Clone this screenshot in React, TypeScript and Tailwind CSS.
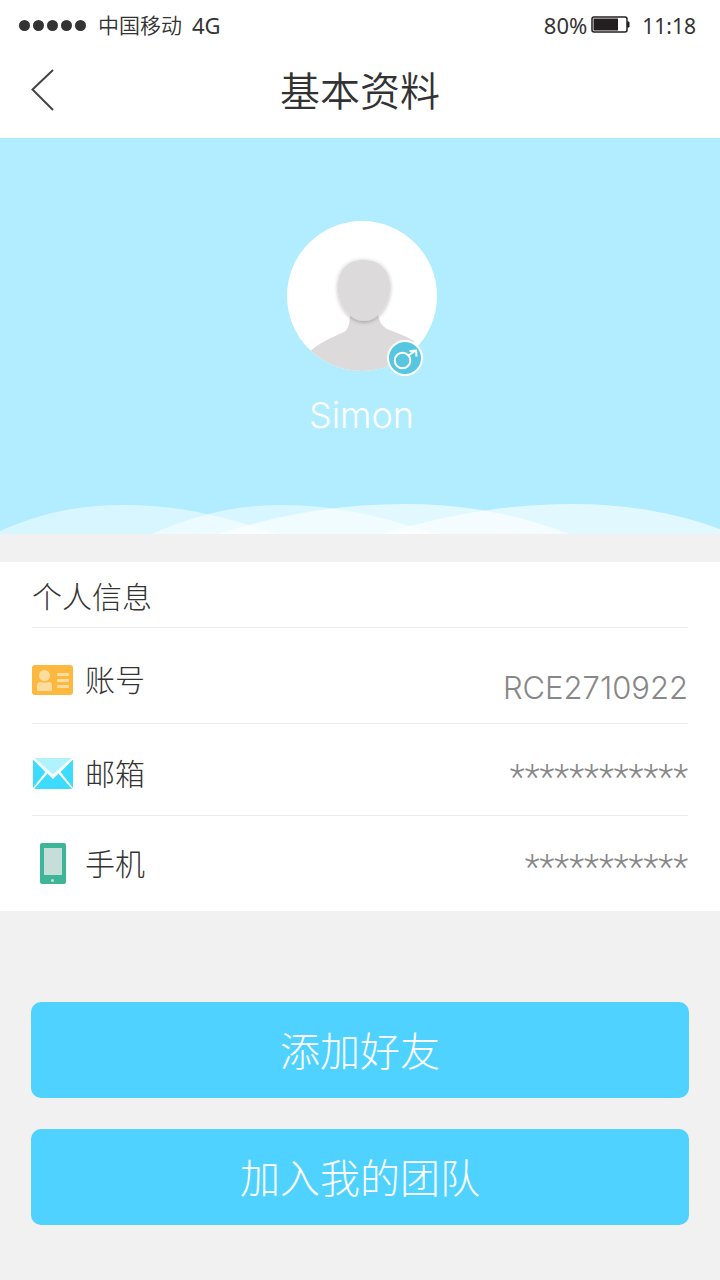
import type { ReactNode } from 'react';

interface InfoRowProps {
  icon: ReactNode;
  label: string;
  children: ReactNode;
  className?: string;
}

// ── Icons ─────────────────────────────────────────────────────────────────────

function BatteryIcon() {
  return (
    <svg className="h-[18px] w-[39px]" viewBox="0 0 39 18" fill="none" aria-hidden="true">
      <rect x="1" y="1" width="35" height="15" rx="2" stroke="#231f20" strokeWidth="1.5" />
      <rect x="2.500" y="2.500" width="24.500" height="12" fill="#231f20" />
      <path d="M36.500 6h1.500v5h-1.500z" fill="#231f20" stroke="#231f20" />
    </svg>
  );
}

function AccountIcon() {
  return (
    <svg className="h-[30px] w-[41px]" viewBox="0 0 41 30" aria-hidden="true">
      <rect width="41" height="30" rx="3" fill="#fcb83f" />
      <g fill="#fddca0">
        <circle cx="12.5" cy="10.5" r="5.5" />
        <path d="M5 26v-5q0-4 3-4 4.500 1.500 9 0 3 0 3 4v5z" />
        <rect x="25" y="8" width="12" height="3" rx="1" />
        <rect x="25" y="14" width="12" height="3" rx="1" />
        <rect x="25" y="20" width="12" height="3" rx="1" />
      </g>
    </svg>
  );
}

function MailIcon() {
  return (
    <svg className="h-[31px] w-[40px]" viewBox="0 0 40 31" aria-hidden="true">
      <path d="M1.500 0h37L20 16.500z" fill="#b0f3ff" />
      <path d="M0 1.500 12.500 14 0 30z" fill="#3ddcff" />
      <path d="M40 1.500 27.500 14 40 30z" fill="#3ddcff" />
      <path d="M1 31 14.500 15.500 20 21l5.500-5.500L39 31z" fill="#3ddcff" />
    </svg>
  );
}

function PhoneIcon() {
  return (
    <svg className="h-[41px] w-[26px]" viewBox="0 0 26 41" aria-hidden="true">
      <rect width="26" height="41" rx="2" fill="#3eb596" />
      <rect x="4" y="5" width="18" height="27" fill="#c5ded9" />
      <circle cx="12.500" cy="37.500" r="1.500" fill="#c5ded9" />
    </svg>
  );
}

function Avatar() {
  return (
    <svg className="size-[150px]" viewBox="0 0 150 150" role="img" aria-label="Simon">
      <defs>
        <clipPath id="avatar-clip">
          <circle cx="75" cy="75" r="75" />
        </clipPath>
        <filter id="head-shadow" x="-30%" y="-30%" width="160%" height="160%">
          <feDropShadow dx="0" dy="1" stdDeviation="2" floodColor="#000" floodOpacity="0.3" />
        </filter>
      </defs>
      <circle cx="75" cy="75" r="75" fill="#fff" />
      <g clipPath="url(#avatar-clip)" fill="#dcdadb">
        <path d="M63 90c0 11-1 18-6 21-14 6-24 11-34 19v20h104v-30c-6-4-14-7-27-12-5-3-9-8-9-18z" />
        <path
          d="M76 39c17 0 27 10 27 27 0 16-11 34-26 34S51 83 51 66c0-17 9-27 25-27z"
          filter="url(#head-shadow)"
        />
      </g>
    </svg>
  );
}

function MaleBadge() {
  return (
    <svg className="size-9" viewBox="0 0 36 36" fill="none" role="img" aria-label="男">
      <circle cx="18" cy="18" r="17" fill="#57c6e1" stroke="#fff" strokeWidth="2" />
      <circle cx="15.500" cy="20.500" r="7.800" stroke="#fff" strokeWidth="2" />
      <path d="m21.500 15.500 7-5M22.500 11l6.500-.5.500 6" stroke="#fff" strokeWidth="2" />
    </svg>
  );
}

function Waves() {
  return (
    <svg
      className="absolute inset-x-0 bottom-0 h-[30px] w-full"
      viewBox="0 0 720 30"
      preserveAspectRatio="none"
      aria-hidden="true"
    >
      <path d="M0 27C40 9 80 1 122 1c60 0 104 12 155 29H0z" fill="#fff" fillOpacity="0.5" />
      <path d="M152 30c42-19 84-29 128-29 56 0 106 12 155 29z" fill="#fff" fillOpacity="0.5" />
      <path d="M218 30C280 10 340 0 405 0c55 0 110 9 164 30z" fill="#fff" fillOpacity="0.62" />
      <path d="M382 30C448 10 510 0 572 0c50 0 98 7 148 25v5z" fill="#fff" fillOpacity="0.62" />
    </svg>
  );
}

// ── Building blocks ───────────────────────────────────────────────────────────

function InfoRow({ icon, label, children, className = '' }: InfoRowProps) {
  return (
    <div className={`flex items-center border-[#ebebeb] ${className}`}>
      <dt className="flex items-center text-[30px] leading-10">
        <span className="mr-3 flex w-[41px] justify-center">{icon}</span>
        <span className="pb-1">{label}</span>
      </dt>
      <dd className="ml-auto pt-4 text-[#888]">{children}</dd>
    </div>
  );
}

function MaskedValue({ length }: { length: number }) {
  return <span className="block pb-2 font-['Roboto',sans-serif] text-[35px] leading-10">{'*'.repeat(length)}</span>;
}

function ActionButton({ children }: { children: ReactNode }) {
  return (
    <button
      type="button"
      className="h-24 w-full rounded-[10px] bg-[#4fd2ff] pb-0.5 text-[40px] font-light text-white transition active:bg-[#3cc4f2]"
    >
      {children}
    </button>
  );
}

export default function App() {
  return (
    <div className="min-h-screen bg-[#f1f1f1] pb-14 font-['Noto_Sans_CJK_SC',sans-serif] text-[#333]">
      {/* Status bar */}
      <div className="flex h-[50px] items-center bg-white pr-6 pl-[19px] font-['Noto_Sans','Noto_Sans_CJK_SC',sans-serif] text-[22px]">
        <div className="flex gap-[3px]">
          {[1, 2, 3, 4, 5].map((n) => (
            <span key={n} className="size-[11px] rounded-full bg-[#333]" />
          ))}
        </div>
        <span className="ml-3 pt-px text-[21px] font-[350]">中国移动</span>
        <span className="ml-2.5">4G</span>
        <span className="ml-auto">80%</span>
        <span className="ml-1">
          <BatteryIcon />
        </span>
        <span className="ml-3 pt-1 text-[21px]">11:18</span>
      </div>

      {/* Header */}
      <header className="grid h-[88px] grid-cols-[80px_1fr_80px] items-center bg-white pb-2">
        <button type="button" aria-label="返回" className="flex h-full items-center pl-[31px]">
          <svg className="h-[42px] w-[23px]" viewBox="0 0 23 42" fill="none">
            <path d="M22 1 1.500 20.500 22 41" stroke="#444" strokeWidth="2" />
          </svg>
        </button>
        <h1 className="pb-0.5 text-center text-[40px] leading-[60px] font-[350]">基本资料</h1>
      </header>

      {/* Profile */}
      <section className="relative flex h-[396px] flex-col items-center bg-[#b1edff] pt-[83px] pl-[3px]">
        <div className="relative">
          <Avatar />
          <div className="absolute right-[14px] bottom-[-5px]">
            <MaleBadge />
          </div>
        </div>
        <p className="mt-5 font-['Inter',sans-serif] text-[36px] leading-[48px] font-light text-white">Simon</p>
        <Waves />
      </section>

      {/* Personal info */}
      <section className="mt-7 bg-white px-8 font-light">
        <h2 className="h-[66px] border-b border-[#ebebeb] pt-2.5 text-[30px] leading-[46px] font-light">个人信息</h2>
        <dl>
          <InfoRow icon={<AccountIcon />} label="账号" className="h-24 border-b pt-2">
            <span className="block font-['Inter',sans-serif] text-[31px] leading-10">RCE2710922</span>
          </InfoRow>
          <InfoRow icon={<MailIcon />} label="邮箱" className="h-[92px] border-b pt-2">
            <MaskedValue length={12} />
          </InfoRow>
          <InfoRow icon={<PhoneIcon />} label="手机" className="h-[95px]">
            <MaskedValue length={11} />
          </InfoRow>
        </dl>
      </section>

      {/* Actions */}
      <div className="mt-[91px] flex flex-col gap-[31px] px-[31px]">
        <ActionButton>添加好友</ActionButton>
        <ActionButton>加入我的团队</ActionButton>
      </div>
    </div>
  );
}
